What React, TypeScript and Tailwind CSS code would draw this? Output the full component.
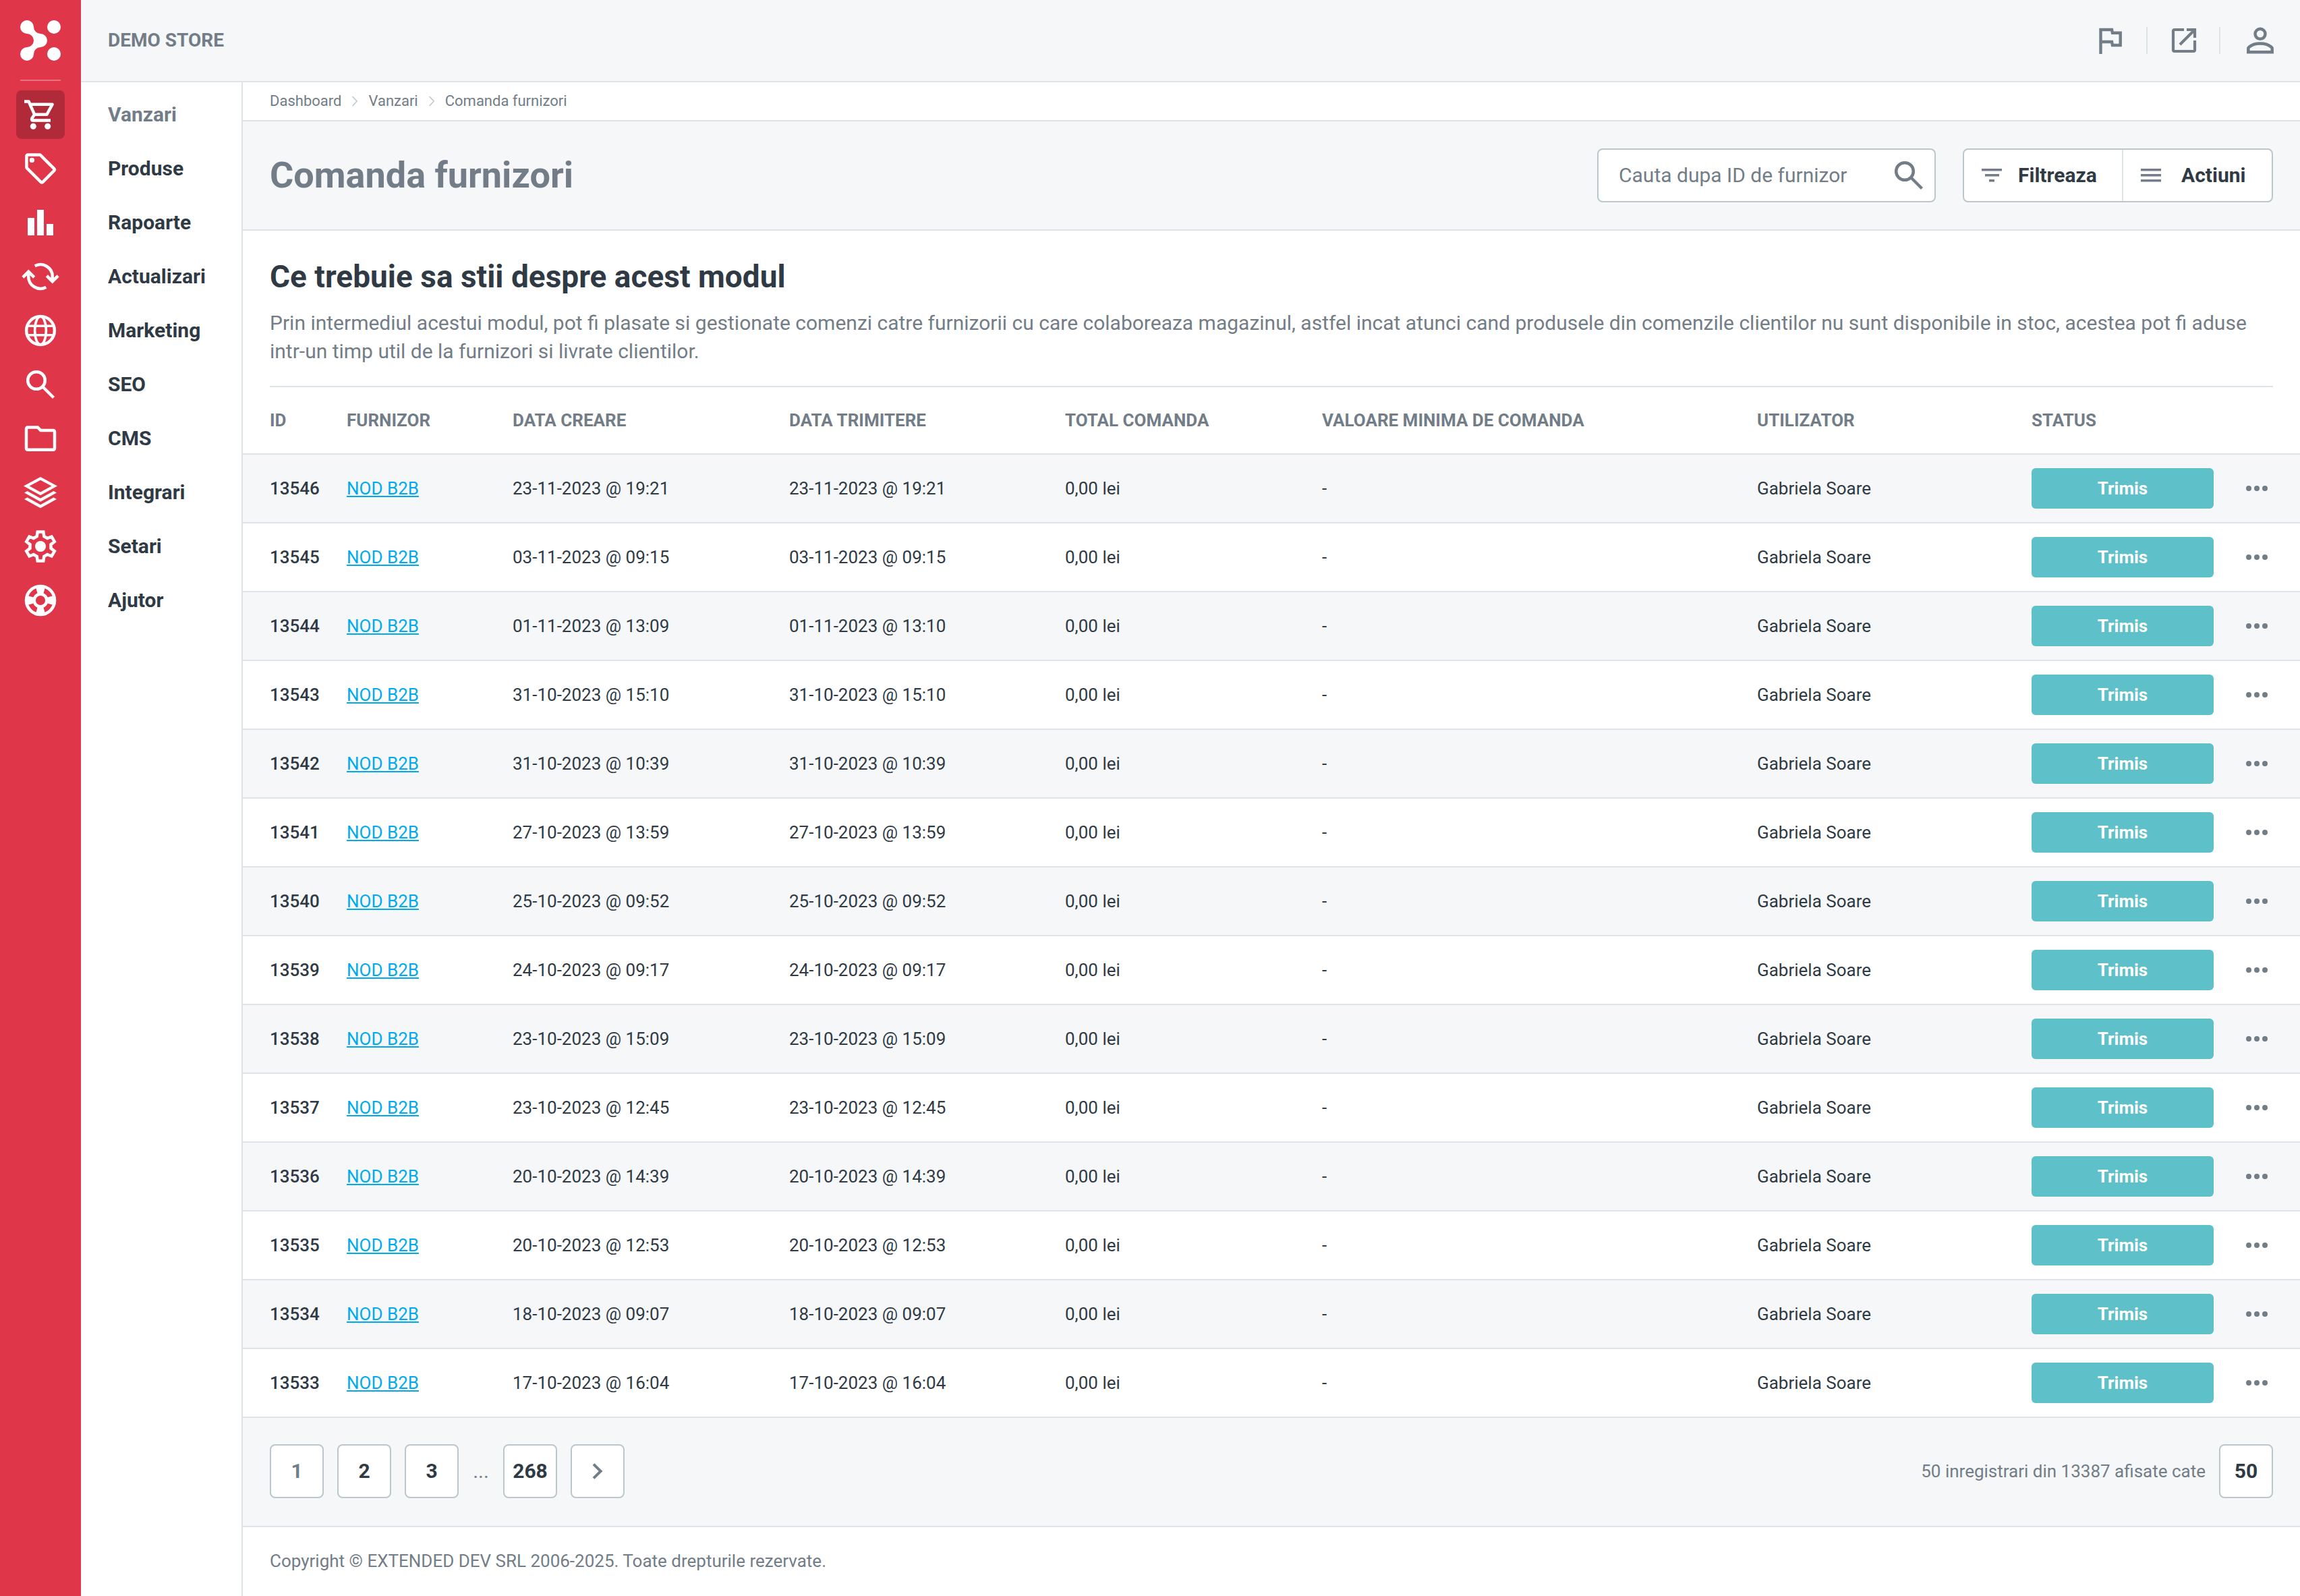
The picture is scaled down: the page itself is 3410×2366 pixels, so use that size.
import React from 'react';

interface Order {
  id: string;
  created: string;
  sent: string;
}

const orders: Order[] = [
  { id: '13546', created: '23-11-2023 @ 19:21', sent: '23-11-2023 @ 19:21' },
  { id: '13545', created: '03-11-2023 @ 09:15', sent: '03-11-2023 @ 09:15' },
  { id: '13544', created: '01-11-2023 @ 13:09', sent: '01-11-2023 @ 13:10' },
  { id: '13543', created: '31-10-2023 @ 15:10', sent: '31-10-2023 @ 15:10' },
  { id: '13542', created: '31-10-2023 @ 10:39', sent: '31-10-2023 @ 10:39' },
  { id: '13541', created: '27-10-2023 @ 13:59', sent: '27-10-2023 @ 13:59' },
  { id: '13540', created: '25-10-2023 @ 09:52', sent: '25-10-2023 @ 09:52' },
  { id: '13539', created: '24-10-2023 @ 09:17', sent: '24-10-2023 @ 09:17' },
  { id: '13538', created: '23-10-2023 @ 15:09', sent: '23-10-2023 @ 15:09' },
  { id: '13537', created: '23-10-2023 @ 12:45', sent: '23-10-2023 @ 12:45' },
  { id: '13536', created: '20-10-2023 @ 14:39', sent: '20-10-2023 @ 14:39' },
  { id: '13535', created: '20-10-2023 @ 12:53', sent: '20-10-2023 @ 12:53' },
  { id: '13534', created: '18-10-2023 @ 09:07', sent: '18-10-2023 @ 09:07' },
  { id: '13533', created: '17-10-2023 @ 16:04', sent: '17-10-2023 @ 16:04' },
];

// All navigation icons share a 56x56 box
const NavIcon: React.FC<{ children: React.ReactNode }> = ({ children }) => (
  <svg
    className="h-14 w-14"
    viewBox="0 0 56 56"
    fill="none"
    stroke="currentColor"
    strokeWidth="4.5"
    aria-hidden="true"
  >
    {children}
  </svg>
);

const SearchIcon: React.FC = () => (
  <NavIcon>
    <circle cx="22" cy="22" r="12.8" />
    <path d="M31 31L47.5 47.5" />
  </NavIcon>
);

const menu = [
  {
    label: 'Vanzari',
    icon: (
      <NavIcon>
        <path d="M4 8.5H10.6L19.2 27.8H37.4L45.6 12.7H12.6" strokeLinejoin="round" />
        <path d="M19.2 27.8L15.3 33.6Q14.3 36.5 17 36.5H43" />
        <circle cx="17.3" cy="45.3" r="4.5" fill="currentColor" stroke="none" />
        <circle cx="38.7" cy="45.3" r="4.5" fill="currentColor" stroke="none" />
      </NavIcon>
    ),
  },
  {
    label: 'Produse',
    icon: (
      <NavIcon>
        <path d="M9.4 7.4H26.6a2 2 0 0 1 1.4.6L48.2 28.2a2 2 0 0 1 0 2.8L31.4 47.8a2 2 0 0 1-2.8 0L8 27.3a2 2 0 0 1-.6-1.4V9.4a2 2 0 0 1 2-2z" />
        <circle cx="15.4" cy="15.4" r="3.6" fill="currentColor" stroke="none" />
      </NavIcon>
    ),
  },
  {
    label: 'Rapoarte',
    icon: (
      <NavIcon>
        <path d="M9 21h10v26H9zM23 9h10v38H23zM37 30h10v17H37z" fill="currentColor" stroke="none" />
      </NavIcon>
    ),
  },
  {
    label: 'Actualizari',
    icon: (
      <NavIcon>
        <path d="M19.7 12.2A17.8 17.8 0 0 1 45.8 28V35M37.3 26.8L45.7 35.2 54.1 26.8" />
        <path d="M36.3 43.8A17.8 17.8 0 0 1 10.2 28V21M18.7 29.2L10.3 20.8 1.9 29.2" />
      </NavIcon>
    ),
  },
  {
    label: 'Marketing',
    icon: (
      <NavIcon>
        <circle cx="28" cy="28" r="20.9" />
        <ellipse cx="28" cy="28" rx="8.4" ry="20.9" strokeWidth="3.6" />
        <path d="M8 21.2H48M8 34.8H48" strokeWidth="3.6" />
      </NavIcon>
    ),
  },
  { label: 'SEO', icon: <SearchIcon /> },
  {
    label: 'CMS',
    icon: (
      <NavIcon>
        <path d="M9 11.5H23.8L28.3 16.1H47a2 2 0 0 1 2 2V42.7a2 2 0 0 1-2 2H9a2 2 0 0 1-2-2V13.5a2 2 0 0 1 2-2z" />
      </NavIcon>
    ),
  },
  {
    label: 'Integrari',
    icon: (
      <NavIcon>
        <g fill="currentColor" stroke="none" fillRule="evenodd">
          <path d="M28 5L53 18.6 28 32.2 3 18.6zM28 9.8L11.6 18.6 28 27.4 44.4 18.6z" />
          <path d="M4 28.4l4.5-2.5L28 36.8l19.5-10.9 4.5 2.5L28 41.7z" />
          <path d="M4 37.9l4.5-2.5L28 46.2l19.5-10.8 4.5 2.5L28 51.2z" />
        </g>
      </NavIcon>
    ),
  },
  {
    label: 'Setari',
    icon: (
      <NavIcon>
        <path d="M22.7 13.2L23.7 6.5H32.3L33.3 13.2 38.2 16 44.5 13.5 48.8 21 43.5 25.2V30.8L48.8 35 44.5 42.5 38.2 40 33.3 42.8 32.3 49.5H23.7L22.7 42.8 17.8 40 11.5 42.5 7.2 35 12.5 30.8V25.2L7.2 21 11.5 13.5 17.8 16z" />
        <circle cx="28" cy="28" r="8" fill="currentColor" stroke="none" />
      </NavIcon>
    ),
  },
  {
    label: 'Ajutor',
    icon: (
      <NavIcon>
        <circle cx="28" cy="28" r="21" strokeWidth="4.6" />
        <circle cx="28" cy="28" r="9.3" />
        <path
          d="M21 8.5H35L32.2 18.5H23.8zM21 47.5H35L32.2 37.5H23.8zM8.5 21V35L18.5 32.2V23.8zM47.5 21V35L37.5 32.2V23.8z"
          fill="currentColor"
          stroke="none"
        />
      </NavIcon>
    ),
  },
];

const Logo: React.FC = () => (
  <svg className="h-[60px] w-[60px]" viewBox="0 0 60 60" fill="currentColor" aria-hidden="true">
    <path d="M20 10A10 10 0 0 0 30 20A10 10 0 0 1 30 40A10 10 0 0 0 20 50A10 10 0 1 1 10 40A10 10 0 0 0 10 20A10 10 0 1 1 20 10Z" />
    <circle cx="50" cy="10" r="10" />
    <circle cx="50" cy="50" r="10" />
  </svg>
);

const Sidebar: React.FC = () => (
  <aside className="flex w-[120px] shrink-0 flex-col bg-[#df3649] text-white">
    <a href="#" aria-label="Acasa" className="mx-[30px] flex h-[120px] items-center border-b-2 border-white/30 pt-0.5">
      <Logo />
    </a>
    <nav className="flex flex-col items-center gap-2 pt-3.5">
      {menu.map((item, i) => (
        <a
          key={item.label}
          href="#"
          aria-label={item.label}
          className={`flex h-[72px] w-[72px] items-center justify-center rounded-lg ${i === 0 ? 'bg-[#b12a39]' : ''}`}
        >
          {item.icon}
        </a>
      ))}
    </nav>
  </aside>
);

const TopBar: React.FC = () => (
  <header className="flex h-[122px] items-center justify-between border-b-2 border-[#dce4e8] bg-[#f5f7f9] pl-10 text-[#727d87]">
    <span className="text-[28px] leading-[34px] font-bold">DEMO STORE</span>
    <div className="flex items-center">
      <button aria-label="Notificari" className="flex h-10 w-[106px] items-center justify-center">
        <svg className="h-12 w-12 shrink-0" viewBox="0 0 48 48" fill="none" stroke="currentColor" strokeWidth="4.4">
          <path d="M9.5 44V8H26l1 4.7h11.7V31H27l-1-5H9.5" />
        </svg>
      </button>
      <a href="#" aria-label="Deschide magazinul" className="flex h-10 w-[110px] items-center justify-center border-x-2 border-[#dce4e8]">
        <svg className="h-12 w-12 shrink-0" viewBox="0 0 48 48" fill="none" stroke="currentColor" strokeWidth="4.2">
          <path d="M25 8H11a2 2 0 0 0-2 2v28a2 2 0 0 0 2 2h28a2 2 0 0 0 2-2V24" />
          <path d="M29 8h12v12M41 8L19 30" />
        </svg>
      </a>
      <button aria-label="Cont" className="flex h-10 w-[118px] items-center justify-center">
        <svg className="h-12 w-12 shrink-0" viewBox="0 0 48 48" fill="none" stroke="currentColor" strokeWidth="4.5">
          <circle cx="24" cy="14.3" r="7.5" />
          <path d="M6.3 41.3V36.5c0-1.5.7-2.5 1.9-3.3C12 30 18 28.4 24 28.4s12 1.6 15.8 4.8c1.2.8 1.9 1.8 1.9 3.3v4.8z" />
        </svg>
      </button>
    </div>
  </header>
);

const Crumbs: React.FC = () => {
  const chevron = (
    <svg className="h-4 w-2" viewBox="0 0 8 16" fill="none" stroke="#bcc8ce" strokeWidth="1.6" aria-hidden="true">
      <path d="M.6 1L7.2 8 .6 15" />
    </svg>
  );
  return (
    <nav className="flex h-[58px] items-center gap-4 border-b-2 border-[#dce4e8] px-10 text-[22px] leading-[28px] text-[#727d87]">
      <a href="#">Dashboard</a>
      {chevron}
      <a href="#">Vanzari</a>
      {chevron}
      <span>Comanda furnizori</span>
    </nav>
  );
};

const PageHeader: React.FC = () => (
  <div className="flex h-[162px] items-center justify-between border-b-2 border-[#dce4e8] bg-[#f5f7f9] px-10">
    <h1 className="text-[54px] leading-[64px] font-bold text-[#727d87]">Comanda furnizori</h1>
    <div className="flex gap-10">
      <div className="flex h-20 w-[502px] items-center rounded-lg border-2 border-[#bac7cc] bg-white pr-2.5 pl-[30px] text-[#727d87]">
        <input
          type="text"
          aria-label="Cauta dupa ID de furnizor"
          placeholder="Cauta dupa ID de furnizor"
          className="min-w-0 flex-1 bg-transparent text-[30px] leading-[36px] outline-none placeholder:text-[#727d87]"
        />
        <button aria-label="Cauta">
          <SearchIcon />
        </button>
      </div>
      <div className="flex h-20 rounded-lg border-2 border-[#bac7cc] bg-white text-[30px] leading-[36px] font-bold text-[#2f3a44]">
        <button className="flex w-[236px] items-center gap-6 border-r-2 border-[#dce4e8] pl-[26px]">
          <svg className="h-5 w-[30px]" viewBox="0 0 30 20" fill="#727d87" aria-hidden="true">
            <path d="M0 0h30v3.6H0zM5 8h21v3.6H5zM11 16h8v3.6H11z" />
          </svg>
          Filtreaza
        </button>
        <button className="flex w-[220px] items-center gap-[30px] pl-[26px]">
          <svg className="h-5 w-[30px]" viewBox="0 0 30 20" fill="#727d87" aria-hidden="true">
            <path d="M0 0h30v3.6H0zM0 8h30v3.6H0zM0 16h30v3.6H0z" />
          </svg>
          Actiuni
        </button>
      </div>
    </div>
  </div>
);

const OrdersTable: React.FC = () => (
  <table className="w-full table-fixed text-left text-[26px] leading-[32px] text-[#2f3a44]">
    <colgroup>
      <col className="w-[134px]" />
      <col className="w-[246px]" />
      <col className="w-[410px]" />
      <col className="w-[409px]" />
      <col className="w-[381px]" />
      <col className="w-[645px]" />
      <col className="w-[407px]" />
      <col className="w-[310px]" />
      <col className="w-[108px]" />
    </colgroup>
    <thead>
      <tr className="h-[99px] border-b-2 border-[#dce4e8] text-[#727d87]">
        <th className="pl-10 font-bold">ID</th>
        <th className="pl-5 font-bold">FURNIZOR</th>
        <th className="pl-5 font-bold">DATA CREARE</th>
        <th className="pl-5 font-bold">DATA TRIMITERE</th>
        <th className="pl-5 font-bold">TOTAL COMANDA</th>
        <th className="pl-5 font-bold">VALOARE MINIMA DE COMANDA</th>
        <th className="pl-5 font-bold">UTILIZATOR</th>
        <th className="pl-5 font-bold">STATUS</th>
        <th aria-label="Optiuni"></th>
      </tr>
    </thead>
    <tbody>
      {orders.map((order) => (
        <tr key={order.id} className="h-[102px] border-b-2 border-[#dce4e8] odd:bg-[#f5f7f9]">
          <td className="pl-10 font-medium">{order.id}</td>
          <td className="pl-5">
            <a href="#" className="text-[#00aaef] underline">NOD B2B</a>
          </td>
          <td className="pl-5">{order.created}</td>
          <td className="pl-5">{order.sent}</td>
          <td className="pl-5">0,00 lei</td>
          <td className="pl-5">-</td>
          <td className="pl-5">Gabriela Soare</td>
          <td className="px-5">
            <span className="flex h-[60px] items-center justify-center rounded-md bg-[#5ec0c8] font-bold text-white">
              Trimis
            </span>
          </td>
          <td className="pr-5">
            <button aria-label={`Optiuni comanda ${order.id}`} className="mx-auto block text-[#727d87]">
              <svg className="h-2 w-8" viewBox="0 0 32 8" fill="currentColor">
                <circle cx="4" cy="4" r="4" />
                <circle cx="16" cy="4" r="4" />
                <circle cx="28" cy="4" r="4" />
              </svg>
            </button>
          </td>
        </tr>
      ))}
    </tbody>
  </table>
);

const Pagination: React.FC = () => {
  const box = 'flex h-20 w-20 items-center justify-center rounded-lg border-2 border-[#bac7cc] bg-white text-[30px] leading-[36px] font-bold';
  return (
    <div className="flex h-[162px] items-center justify-between border-b-2 border-[#dce4e8] bg-[#f5f7f9] px-10 pb-0.5">
      <div className="flex items-center gap-5 text-[#2f3a44]">
        <button className={`${box} text-[#727d87]`}>1</button>
        <button className={box}>2</button>
        <button className={box}>3</button>
        <span className="w-[26px] text-center text-[30px] leading-[36px] text-[#727d87]">...</span>
        <button className={box}>268</button>
        <button aria-label="Pagina urmatoare" className={`${box} text-[#727d87]`}>
          <svg className="h-6 w-4" viewBox="0 0 16 24" fill="none" stroke="currentColor" strokeWidth="4">
            <path d="M2 1.6L12.6 12 2 22.4" />
          </svg>
        </button>
      </div>
      <div className="flex items-center gap-5">
        <label htmlFor="perPage" className="text-[26px] leading-[32px] text-[#727d87]">
          50 inregistrari din 13387 afisate cate
        </label>
        <select
          id="perPage"
          className="h-20 w-20 appearance-none rounded-lg border-2 border-[#bac7cc] bg-white text-center text-[30px] leading-[36px] font-bold text-[#2f3a44]"
        >
          <option>50</option>
        </select>
      </div>
    </div>
  );
};

export default function App() {
  return (
    <div className="flex min-h-screen bg-white font-[Roboto,sans-serif]">
      <Sidebar />
      <div className="flex min-w-0 flex-1 flex-col">
        <TopBar />
        <div className="flex flex-1">
          <nav className="flex w-[240px] shrink-0 flex-col border-r-2 border-[#dce4e8] pt-2">
            {menu.map((item, i) => (
              <a
                key={item.label}
                href="#"
                className={`flex h-20 items-center pl-10 text-[30px] leading-[36px] font-bold ${i === 0 ? 'text-[#727d87]' : 'text-[#2f3a44]'}`}
              >
                {item.label}
              </a>
            ))}
          </nav>
          <main className="min-w-0 flex-1">
            <Crumbs />
            <PageHeader />
            <section className="mx-10 border-b-2 border-[#dce4e8] pt-10 pb-[30px]">
              <h2 className="text-[46px] leading-[56px] font-bold text-[#2f3a44]">
                Ce trebuie sa stii despre acest modul
              </h2>
              <p className="mt-5 text-[30px] leading-[42px] text-[#727d87]">
                Prin intermediul acestui modul, pot fi plasate si gestionate comenzi catre furnizorii cu care
                colaboreaza magazinul, astfel incat atunci cand produsele din comenzile clientilor nu sunt
                disponibile in stoc, acestea pot fi aduse intr-un timp util de la furnizori si livrate clientilor.
              </p>
            </section>
            <OrdersTable />
            <Pagination />
            <footer className="flex h-[100px] items-center px-10 text-[26px] leading-[32px] text-[#727d87]">
              Copyright © EXTENDED DEV SRL 2006-2025. Toate drepturile rezervate.
            </footer>
          </main>
        </div>
      </div>
    </div>
  );
}
